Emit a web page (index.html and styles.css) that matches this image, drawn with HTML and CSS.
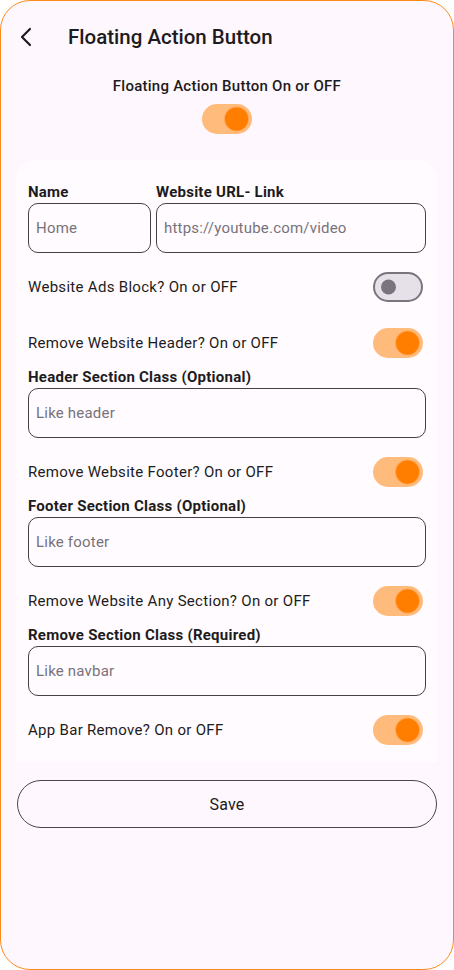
FILE: index.html
```html
<!DOCTYPE html>
<html lang="en">
<head>
<meta charset="utf-8">
<title>Floating Action Button</title>
<link rel="stylesheet" href="styles.css">
</head>
<body>
<div class="frame">
  <header class="appbar">
    <button class="back" aria-label="Back">
      <svg width="14" height="20" viewBox="0 0 14 20"><path d="M11 2 L3 10 L11 18" fill="none" stroke="#1d1b20" stroke-width="2.2" stroke-linecap="round" stroke-linejoin="round"/></svg>
    </button>
    <h1 class="title">Floating Action Button</h1>
  </header>

  <section class="fab-toggle">
    <div class="fab-label">Floating Action Button On or OFF</div>
    <span class="switch on"><span class="thumb"></span></span>
  </section>

  <main class="card">
    <div class="pair">
      <div class="field name">
        <div class="label">Name</div>
        <div class="input">Home</div>
      </div>
      <div class="field url">
        <div class="label">Website URL- Link</div>
        <div class="input">https://youtube.com/video</div>
      </div>
    </div>

    <div class="row first">
      <span class="row-text">Website Ads Block? On or OFF</span>
      <span class="switch off"><span class="thumb"></span></span>
    </div>

    <div class="row">
      <span class="row-text">Remove Website Header? On or OFF</span>
      <span class="switch on"><span class="thumb"></span></span>
    </div>
    <div class="label">Header Section Class (Optional)</div>
    <div class="input">Like header</div>

    <div class="row after-input">
      <span class="row-text">Remove Website Footer? On or OFF</span>
      <span class="switch on"><span class="thumb"></span></span>
    </div>
    <div class="label">Footer Section Class (Optional)</div>
    <div class="input">Like footer</div>

    <div class="row after-input">
      <span class="row-text">Remove Website Any Section? On or OFF</span>
      <span class="switch on"><span class="thumb"></span></span>
    </div>
    <div class="label">Remove Section Class (Required)</div>
    <div class="input">Like navbar</div>

    <div class="row after-input">
      <span class="row-text">App Bar Remove? On or OFF</span>
      <span class="switch on"><span class="thumb"></span></span>
    </div>
  </main>

  <button class="save">Save</button>
</div>
</body>
</html>
```

FILE: styles.css
```css
* { box-sizing: border-box; }
html, body { margin: 0; padding: 0; background: #ffffff; }
body {
  font-family: Roboto, "Noto Sans", "Liberation Sans", sans-serif;
  color: #1d1b20;
}
.frame {
  width: 454px;
  height: 970px;
  border: 1px solid #ff8a1c;
  border-radius: 30px;
  background: #fef7fd;
  overflow: hidden;
  display: flex;
  flex-direction: column;
}
.appbar {
  height: 56px;
  margin-top: 8px;
  display: flex;
  align-items: center;
  padding-left: 17px;
}
.back {
  width: 16px;
  height: 24px;
  padding: 0;
  border: 0;
  background: none;
  display: flex;
  align-items: center;
  justify-content: center;
}
.title {
  margin: 0 0 0 34px;
  font-size: 20.5px;
  font-weight: 500;
  letter-spacing: 0;
  color: #1d1b20;
}
.fab-toggle {
  display: flex;
  flex-direction: column;
  align-items: center;
  margin-top: 11px;
}
.fab-label {
  font-size: 15px;
  font-weight: 500;
  line-height: 20px;
  letter-spacing: 0.25px;
}
.fab-toggle .switch { margin-top: 8px; }

.switch {
  position: relative;
  display: inline-block;
  width: 50px;
  height: 30px;
  border-radius: 15px;
  flex: none;
}
.switch .thumb {
  position: absolute;
  top: 50%;
  border-radius: 50%;
  transform: translateY(-50%);
}
.switch.on { background: #ffbb7c; }
.switch.on .thumb {
  right: 4px;
  width: 23px;
  height: 23px;
  background: #ff7e00;
  box-shadow: 0 0 0 1px #ffa552;
}
.switch.off {
  background: #e6e0e9;
  border: 2px solid #79747e;
}
.switch.off .thumb {
  left: 6px;
  width: 15px;
  height: 15px;
  background: #79747e;
}

.card {
  margin: 26px 16px 0 15px;
  background: #fffbff;
  border-radius: 20px 20px 0 0;
  padding: 22px 11px 8px 12px;
  display: flex;
  flex-direction: column;
}
.pair {
  display: flex;
  gap: 5px;
}
.field { display: flex; flex-direction: column; }
.field.name { width: 123px; flex: none; }
.field.url { flex: 1; }
.label {
  font-size: 15px;
  font-weight: 700;
  line-height: 20px;
  height: 20px;
  margin-bottom: 1px;
  letter-spacing: 0.25px;
}
.input {
  height: 50px;
  border: 1px solid #444047;
  border-radius: 10px;
  display: flex;
  align-items: center;
  padding: 0 7px;
  font-size: 15px;
  letter-spacing: 0.2px;
  color: #77737b;
}
.row {
  height: 48px;
  display: flex;
  align-items: center;
  justify-content: space-between;
  margin-top: 8px;
  padding-right: 3px;
}
.row.first, .row.after-input { margin-top: 10px; }
.row-text {
  font-size: 15px;
  font-weight: 400;
  letter-spacing: 0.3px;
}
.save {
  margin: 18px 16px 0 16px;
  height: 48px;
  border: 1px solid #4a454f;
  border-radius: 24px;
  background: transparent;
  font-family: inherit;
  font-size: 16px;
  color: #1d1b20;
  letter-spacing: 0.2px;
}
```
